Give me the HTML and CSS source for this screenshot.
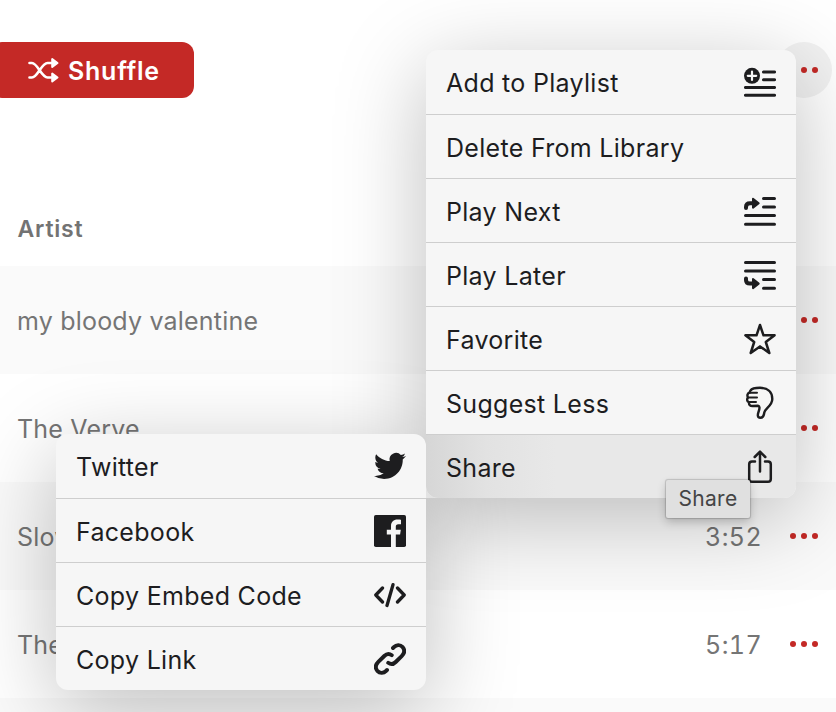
FILE: index.html
```html
<!DOCTYPE html>
<html lang="en">
<head>
<meta charset="utf-8">
<title>Library</title>
<link rel="stylesheet" href="styles.css">
</head>
<body>
<main class="page">
  <header class="toolbar">
    <button class="shuffle">
      <svg width="32" height="26" viewBox="0 0 32 26" fill="none" stroke="currentColor" stroke-width="2.600" stroke-linecap="round" stroke-linejoin="round"><path d="M2.500 6H5C10.500 6 14.500 20.500 20.500 20.500H24M2.500 20.500H5C10.500 20.500 14.500 6 20.500 6H24"/><path d="M25.200 2V10L30.500 6ZM25.200 16.500V24.500L30.500 20.500Z" fill="currentColor" stroke-width="2"/></svg>
      <span>Shuffle</span>
    </button>
    <button class="more round"><i></i><i></i><i></i></button>
  </header>
  <div class="columns">Artist</div>
  <section class="tracks">
    <div class="track"><span class="artist">my bloody valentine</span><span class="more"><i></i><i></i><i></i></span></div>
    <div class="track"><span class="artist">The Verve</span><span class="more"><i></i><i></i><i></i></span></div>
    <div class="track"><span class="artist">Slow</span><span class="time">3:52</span><span class="more"><i></i><i></i><i></i></span></div>
    <div class="track"><span class="artist">The</span><span class="time">5:17</span><span class="more"><i></i><i></i><i></i></span></div>
    <div class="track"></div>
  </section>
</main>

<ul class="menu menu-main">
  <li><span>Add to Playlist</span>
    <svg width="32" height="32" viewBox="0 0 32 32" fill="none" stroke="currentColor" stroke-width="3.100" stroke-linecap="round"><path d="M19.500 5H30.500M19.500 12.700H30.500M1.500 20.500H30.500M1.500 28.300H30.500"/><circle cx="8" cy="8.800" r="8" fill="currentColor" stroke="none"/><path d="M8 4.600V13M3.800 8.800H12.200" stroke="#f6f6f6" stroke-width="2.200"/></svg></li>
  <li><span>Delete From Library</span></li>
  <li><span>Play Next</span>
    <svg width="32" height="32" viewBox="0 -.9 32 32" fill="none" stroke="currentColor" stroke-width="3" stroke-linecap="round"><path d="M19.500 2.600H30.500M19.500 11H30.500M1.500 19.600H30.500M1.500 28.300H30.500"/><path d="M2 12V11Q2 7.300 6 7.300H9" stroke-width="4"/><path d="M9 2.800L14.700 7.300L9 11.800Z" fill="currentColor" stroke-width="2" stroke-linejoin="round"/></svg></li>
  <li><span>Play Later</span>
    <svg width="32" height="32" viewBox="0 -.9 32 32" fill="none" stroke="currentColor" stroke-width="3" stroke-linecap="round"><path d="M1.500 2.600H30.500M1.500 11H30.500M19.500 19.700H30.500M19.500 28.300H30.500"/><path d="M2 18.500V20Q2 23.700 6 23.700H9" stroke-width="4"/><path d="M9 19.200L14.700 23.700L9 28.200Z" fill="currentColor" stroke-width="2" stroke-linejoin="round"/></svg></li>
  <li><span>Favorite</span>
    <svg width="32" height="32" viewBox="0 0 32 32" fill="none" stroke="currentColor" stroke-width="2.500" stroke-linejoin="round"><path d="M16 2L19.500 12.300H30.600L21.800 19L25.300 30L16 23.400L6.700 30L10.200 19L1.400 12.300H12.500Z"/></svg></li>
  <li><span>Suggest Less</span>
    <svg width="32" height="36" viewBox="0 0 32 36" fill="none" stroke="currentColor" stroke-width="2.400" stroke-linecap="round" stroke-linejoin="round"><path d="M6.500 5.500C8 3.300 11 2.800 16 2.800C24 2.800 28.300 7 28.300 14C28.300 21 21 23 20.300 27.500C19.900 31 18.500 32.800 16.200 32.800C13.500 32.800 13.400 30 14.500 27C15.800 23.500 16 21 14 20.800L8.500 21C6 21 4.800 19.800 5 17.500C2.700 16.500 2.800 13.500 4 12.500C2.800 10.500 3.500 7.600 6 7.500C5.800 6.700 6 6 6.500 5.500Z"/><path d="M6 7.700H13M4.500 12.500H13M5 17H12" stroke-width="2"/></svg></li>
  <li class="active"><span>Share</span>
    <svg width="32" height="36" viewBox="0 0 32 36" fill="none" stroke="currentColor" stroke-width="2.500" stroke-linecap="round" stroke-linejoin="round"><path d="M11 12.500H8Q5.200 12.500 5.200 15.300V30Q5.200 32.800 8 32.800H24Q26.800 32.800 26.800 30V15.300Q26.800 12.500 24 12.500H21M16 22.500V3M10.700 8L16 2.700L21.300 8"/></svg></li>
</ul>

<ul class="menu menu-share">
  <li><span>Twitter</span>
    <svg width="32" height="32" viewBox="0 2.800 24 20" fill="currentColor"><path d="M23.953 4.570a10 10 0 01-2.825.775 4.958 4.958 0 002.163-2.723c-.951.555-2.005.959-3.127 1.184a4.920 4.920 0 00-8.384 4.482C7.690 8.095 4.067 6.130 1.640 3.162a4.822 4.822 0 00-.666 2.475c0 1.710.870 3.213 2.188 4.096a4.904 4.904 0 01-2.228-.616v.060a4.923 4.923 0 003.946 4.827 4.996 4.996 0 01-2.212.085 4.936 4.936 0 004.604 3.417 9.867 9.867 0 01-6.102 2.105c-.390 0-.779-.023-1.170-.067a13.995 13.995 0 007.557 2.209c9.053 0 13.998-7.496 13.998-13.985 0-.210 0-.420-.015-.630A9.935 9.935 0 0024 4.590z"/></svg></li>
  <li><span>Facebook</span>
    <svg width="32" height="32" viewBox="0 0 32 32"><rect width="32" height="32" rx="1.800" fill="currentColor"/><path d="M17 32V19.600H12.800V14.800H17V11.200C17 7 19.600 4.600 23.500 4.600C25 4.600 26.500 4.700 27 4.800V9.200H24.400C22.300 9.200 21.800 10.200 21.800 11.800V14.800H26.800L26.100 19.600H21.800V32Z" fill="#f5f5f5"/></svg></li>
  <li><span>Copy Embed Code</span>
    <svg width="32" height="32" viewBox="0 0 32 32" fill="none" stroke="currentColor" stroke-width="3.300" stroke-linecap="round" stroke-linejoin="round"><path d="M8.500 9L1.800 16L8.500 23M23.500 9L30.200 16L23.500 23M19 5.700L13 26.500"/></svg></li>
  <li><span>Copy Link</span>
    <svg width="32" height="32" viewBox="0 0 32 32" fill="none" stroke="currentColor" stroke-width="3.900" stroke-linecap="round"><path d="M17.800 12.200C15.500 10.500 12.500 10.800 10.300 13L4.300 18.800C1.200 21.900 1.200 25.200 3.300 27.800C6 30.700 9.500 30.300 12.300 27.700L13 27"/><path d="M14.200 19.800C16.500 21.500 19.500 21.200 21.700 19L27.700 13.200C30.800 10.100 30.800 6.800 28.700 4.200C26 1.300 22.500 1.700 19.700 4.300L19 5"/></svg></li>
</ul>

<div class="tooltip">Share</div>
</body>
</html>
```
FILE: styles.css
```css
* { box-sizing: border-box; }
body {
  margin: 0;
  width: 836px;
  height: 712px;
  overflow: hidden;
  position: relative;
  background: #fff;
  color: #1d1d1f;
  font-family: Inter, "Liberation Sans", sans-serif;
  font-size: 25px;
}
svg { display: block; flex: none; }
.page { height: 712px; overflow: hidden; }
.toolbar {
  display: flex;
  justify-content: space-between;
  height: 98px;
  padding: 42px 4px 0 0;
}
.shuffle {
  display: flex;
  align-items: center;
  gap: 9px;
  width: 204px;
  height: 56px;
  margin-left: -10px;
  padding: 2px 0 0 37px;
  border: 0;
  border-radius: 12px;
  background: #c42926;
  color: #fff;
  font: 600 25px Inter, "Liberation Sans", sans-serif;
  letter-spacing: .75px;
}
.shuffle svg { margin-top: -2px; }
.more {
  display: flex;
  align-items: center;
  justify-content: center;
  gap: 4.6px;
  width: 56px;
  height: 56px;
}
.more i { width: 6.400px; height: 6.400px; border-radius: 50%; background: #c42926; }
.round { border: 0; padding: 0; border-radius: 50%; background: #f2f2f2; }
.columns {
  display: flex;
  align-items: center;
  height: 168px;
  padding: 94px 0 0 17.500px;
  color: #737373;
  font-size: 23px;
  font-weight: 600;
  letter-spacing: .8px;
}
.track {
  display: flex;
  align-items: center;
  height: 108px;
  padding: 0 4px 0 17px;
  color: #757575;
  letter-spacing: .2px;
}
.track:nth-child(odd) { background: #fafafa; }
.artist { flex: 1; padding-top: 2px; }
.time { margin-right: 14px; padding-top: 2px; font-variant-numeric: tabular-nums; letter-spacing: .4px; }
.menu {
  position: absolute;
  width: 370px;
  margin: 0;
  padding: 0;
  list-style: none;
  border-radius: 12px;
  background: #f6f6f6;
  box-shadow: 0 20px 90px rgba(0, 0, 0, .26);
  letter-spacing: .3px;
}
.menu li {
  display: flex;
  align-items: center;
  justify-content: space-between;
  height: 64px;
  padding: 2px 20px 0;
}
.menu li + li { border-top: 1px solid #cecece; }
.menu li:last-child { border-radius: 0 0 12px 12px; }
.menu svg { margin-top: -1px; }
.menu-main { left: 426px; top: 50px; z-index: 1; }
.menu-share { left: 56px; top: 434px; z-index: 2; box-shadow: none; }
/* The submenu's shadow falls on the page, below the main menu. */
.menu-share::before {
  content: "";
  position: absolute;
  inset: 0;
  z-index: -1;
  border-radius: 12px;
  box-shadow: 0 20px 90px rgba(0, 0, 0, .26);
  clip-path: polygon(-120px -120px, 370px -120px, 370px 64px, 600px 64px, 600px 400px, -120px 400px);
}
.menu .active { background: linear-gradient(90deg, #d6d6d6, #e2e2e2 60px, #e8e8e8 130px); }
.tooltip {
  position: absolute;
  z-index: 3;
  left: 666px;
  top: 480px;
  width: 84px;
  height: 38px;
  border-radius: 2px;
  background: #e0e0e0;
  box-shadow: 0 0 1px 1px rgba(0, 0, 0, .16), 0 4px 10px rgba(0, 0, 0, .2);
  color: #454545;
  font-size: 21px;
  line-height: 38px;
  letter-spacing: .3px;
  text-align: center;
}
```
